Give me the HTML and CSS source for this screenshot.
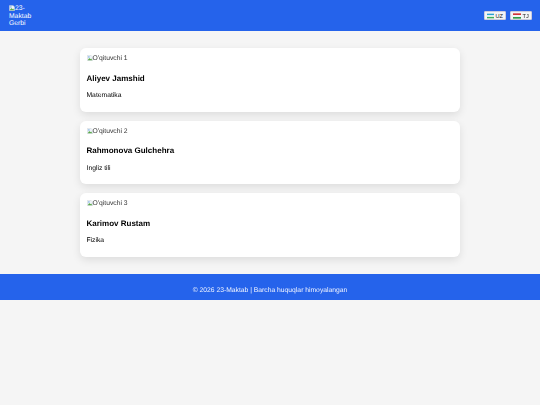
FILE: index.html
```html
<!DOCTYPE html>
<html lang="uz">
<head>
  <meta charset="UTF-8" />
  <title>23-Maktab</title>
  <link rel="stylesheet" href="styles.css">
</head>
<body>

  <header class="topbar">
    <div class="logo">
      <svg class="broken" viewBox="0 0 16 16"><path d="M1 1h10l4 4v10H1z" fill="#eef3f8" stroke="#b8c2cc" stroke-width="1"/><path d="M2 14l4-6 3 3 2-2 3 5z" fill="#5aa845"/><circle cx="5" cy="5" r="2.5" fill="#9cc3ea"/></svg>23-Maktab Gerbi
    </div>
    <div class="lang">
      <button class="lang-btn">
        <svg class="flag" viewBox="0 0 12 8"><rect width="12" height="8" fill="#fff"/><rect width="12" height="2.6" fill="#2b9fd0"/><rect y="5.4" width="12" height="2.6" fill="#3fae5a"/></svg>UZ
      </button>
      <button class="lang-btn">
        <svg class="flag" viewBox="0 0 12 8"><rect width="12" height="8" fill="#fff"/><rect width="12" height="2.6" fill="#d0343a"/><rect y="5.4" width="12" height="2.6" fill="#2f9a4a"/></svg>TJ
      </button>
    </div>
  </header>

  <main class="teachers">
    <div class="card">
      <div class="photo"><svg class="broken" viewBox="0 0 16 16"><path d="M1 1h10l4 4v10H1z" fill="#eef3f8" stroke="#b8c2cc" stroke-width="1"/><path d="M2 14l4-6 3 3 2-2 3 5z" fill="#5aa845"/><circle cx="5" cy="5" r="2.5" fill="#9cc3ea"/></svg>O'qituvchi 1</div>
      <h3>Aliyev Jamshid</h3>
      <p>Matematika</p>
    </div>
    <div class="card">
      <div class="photo"><svg class="broken" viewBox="0 0 16 16"><path d="M1 1h10l4 4v10H1z" fill="#eef3f8" stroke="#b8c2cc" stroke-width="1"/><path d="M2 14l4-6 3 3 2-2 3 5z" fill="#5aa845"/><circle cx="5" cy="5" r="2.5" fill="#9cc3ea"/></svg>O'qituvchi 2</div>
      <h3>Rahmonova Gulchehra</h3>
      <p>Ingliz tili</p>
    </div>
    <div class="card">
      <div class="photo"><svg class="broken" viewBox="0 0 16 16"><path d="M1 1h10l4 4v10H1z" fill="#eef3f8" stroke="#b8c2cc" stroke-width="1"/><path d="M2 14l4-6 3 3 2-2 3 5z" fill="#5aa845"/><circle cx="5" cy="5" r="2.5" fill="#9cc3ea"/></svg>O'qituvchi 3</div>
      <h3>Karimov Rustam</h3>
      <p>Fizika</p>
    </div>
  </main>

  <footer class="footer">© 2026 23-Maktab | Barcha huquqlar himoyalangan</footer>

</body>
</html>
```

FILE: styles.css
```css
body {
  margin: 0;
  font-family: "Liberation Sans", Arial, sans-serif;
  font-size: 6.75px;
  text-rendering: geometricPrecision;
  background: #f5f5f5;
  color: #000;
  filter: blur(0.25px);
}

.topbar {
  height: 31px;
  box-sizing: border-box;
  padding: 3px 8px 3px 9px;
  display: flex;
  justify-content: space-between;
  align-items: center;
  background: #2563eb;
  color: #fff;
}

.logo {
  width: 26px;
  height: 24px;
  line-height: 7.5px;
  padding-top: 1.5px;
  box-sizing: border-box;
}

.broken {
  width: 6px;
  height: 6px;
  vertical-align: -1px;
}

.lang {
  display: flex;
  gap: 4px;
}

.lang-btn {
  display: flex;
  align-items: center;
  gap: 1.5px;
  width: 22px;
  height: 9px;
  padding: 0 2px;
  border: 1px solid #ccd;
  border-radius: 1px;
  background: #f3f4f6;
  font: inherit;
  font-size: 5.6px;
  color: #222;
}

.flag {
  width: 8px;
  height: 6px;
}

.teachers {
  width: 380px;
  margin: 17px auto 0;
  display: flex;
  flex-direction: column;
  gap: 9px;
}

.card {
  height: 63.5px;
  box-sizing: border-box;
  padding: 6px 6.5px;
  background: #fff;
  border-radius: 6px;
  box-shadow: 0 3px 9px rgba(0, 0, 0, 0.1);
}

.photo {
  height: 9px;
  line-height: 9px;
  color: #333;
}

.card h3 {
  margin: 10.5px 0 0;
  font-size: 8px;
  line-height: 10px;
}

.card p {
  margin: 7.5px 0 0;
  line-height: 9px;
}

.footer {
  margin-top: 17.5px;
  height: 26px;
  line-height: 33px;
  text-align: center;
  background: #2563eb;
  color: #f0f4ff;
}
```
